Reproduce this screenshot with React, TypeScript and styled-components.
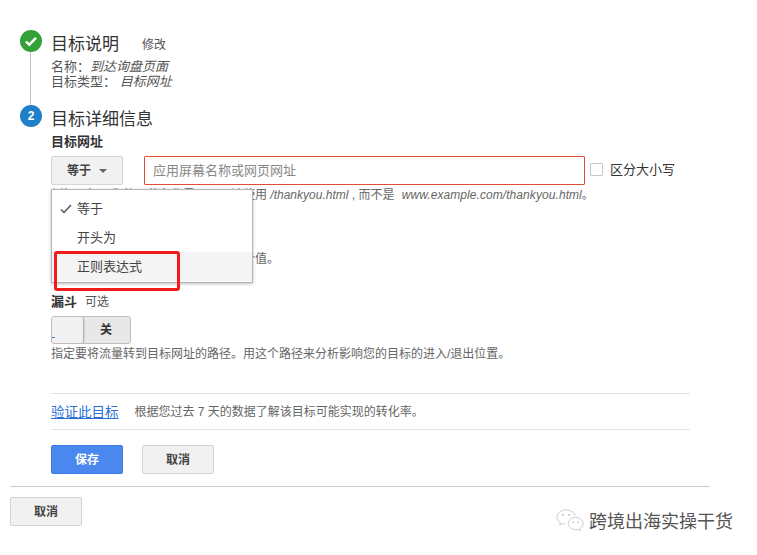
import styled, { createGlobalStyle } from "styled-components"

const GlobalStyle = createGlobalStyle`
	html, body {
		margin: 0;
		padding: 0;
		background: #fff;
	}
	body {
		font-family: "Liberation Sans", Arial, "Noto Sans CJK SC", sans-serif;
		color: #444;
	}
`

const Page = styled.div`
	width: 757px;
	height: 555px;
	overflow: hidden;
	position: relative;
	padding: 30px 0 0 10px;
	box-sizing: border-box;
`

const Steps = styled.div`
	width: 670px;
	padding-left: 10px;
`

const Step = styled.div`
	display: flex;
`

const Rail = styled.div`
	width: 31px;
	flex: none;
	display: flex;
	flex-direction: column;
	align-items: flex-start;
`

const Circle = styled.div<{ $done?: boolean }>`
	width: 22px;
	height: 22px;
	border-radius: 50%;
	background: ${(p) => (p.$done ? "#34a038" : "#1f7fc8")};
	color: #fff;
	font-size: 12px;
	font-weight: bold;
	display: flex;
	align-items: center;
	justify-content: center;
`

const RailLine = styled.div`
	width: 1px;
	height: 53px;
	margin-left: 10px;
	background: #c4c4c4;
`

const StepBody = styled.div`
	flex: 1;
	min-width: 0;
`

const TitleRow = styled.div`
	display: flex;
	align-items: center;
	height: 26px;
`

const StepTitle = styled.div`
	font-size: 17px;
	color: #333;
	margin-top: -1px;
`

const EditLink = styled.span`
	font-size: 12px;
	color: #555;
	margin-left: 23px;
`

const Summary = styled.div`
	font-size: 13px;
	line-height: 15px;
	color: #555;
	margin-top: 3px;
	em {
		font-style: italic;
	}
`

const FieldLabel = styled.div`
	font-size: 13px;
	font-weight: bold;
	color: #333;
	line-height: 16px;
	margin-top: 3px;
`

const MatchRow = styled.div`
	display: flex;
	align-items: center;
	margin-top: 6px;
	height: 29px;
	position: relative;
`

const GreyButton = styled.div`
	box-sizing: border-box;
	width: 72px;
	height: 29px;
	padding-bottom: 2px;
	background: #f1f1f1;
	border: 1px solid #d4d4d4;
	border-radius: 2px;
	font-size: 12px;
	font-weight: bold;
	color: #444;
	display: flex;
	align-items: center;
	justify-content: center;
	flex: none;
`

const Caret = styled.span`
	width: 0;
	height: 0;
	margin-left: 8px;
	margin-top: 2px;
	border-left: 4px solid transparent;
	border-right: 4px solid transparent;
	border-top: 4px solid #666;
`

const UrlInput = styled.div`
	box-sizing: border-box;
	width: 441px;
	height: 29px;
	margin-left: 21px;
	border: 1px solid #e34b33;
	border-radius: 1px;
	padding-left: 8px;
	font-size: 13px;
	line-height: 27px;
	color: #888;
	flex: none;
`

const CheckBox = styled.span`
	box-sizing: border-box;
	width: 13px;
	height: 13px;
	margin: 0 0 3px 5px;
	border: 1px solid #c8c8c8;
	border-radius: 1px;
	flex: none;
`

const CheckLabel = styled.span`
	font-size: 13px;
	color: #333;
	margin: 0 0 5px 7px;
`

const Hint = styled.div`
	font-size: 12px;
	line-height: 14px;
	color: #666;
	white-space: nowrap;
	em {
		font-style: italic;
	}
`

const MatchHint = styled(Hint)`
	margin-top: 3px;
`

const ExampleUrl = styled.em`
	margin-left: 4px;
	letter-spacing: 0.07px;
`

const ValueHint = styled(Hint)`
	margin-top: 50px;
`

const Menu = styled.div`
	position: absolute;
	left: 51px;
	top: 189px;
	box-sizing: border-box;
	width: 202px;
	height: 94px;
	background: #fff;
	border: 1px solid #b4b4b4;
	box-shadow: 0 1px 3px rgba(0, 0, 0, 0.25);
	padding-top: 4px;
`

const MenuItem = styled.div<{ $hover?: boolean }>`
	height: 29px;
	padding-left: 25px;
	position: relative;
	font-size: 13px;
	line-height: 30px;
	color: #444;
	background: ${(p) => (p.$hover ? "#f4f4f4" : "transparent")};
`

const Tick = styled.svg`
	position: absolute;
	left: 8px;
	top: 9px;
	width: 12px;
	height: 12px;
`

const RedMark = styled.div`
	position: absolute;
	left: 54px;
	top: 251px;
	box-sizing: border-box;
	width: 126px;
	height: 40px;
	border: 3px solid #f01c1c;
	border-radius: 3px;
`

const FunnelLabel = styled.div`
	margin-top: 26px;
	display: flex;
	align-items: center;
	gap: 8px;
	height: 16px;
	font-size: 12px;
	color: #555;
	strong {
		font-size: 13px;
		color: #333;
	}
`

const Toggle = styled.div`
	box-sizing: border-box;
	display: flex;
	width: 80px;
	height: 28px;
	margin-top: 8px;
	background: #e8e8e8;
	border: 1px solid #bdbdbd;
	border-radius: 3px;
	overflow: hidden;
	position: relative;
`

const Knob = styled.div`
	box-sizing: border-box;
	width: 32px;
	background: #f1f1f1;
	border-right: 1px solid #b4b4b4;
	border-radius: 0 3px 3px 0;
	box-shadow: 1px 0 1px rgba(0, 0, 0, 0.1);
`

const ToggleText = styled.div`
	flex: 1;
	padding-right: 2px;
	font-size: 12px;
	font-weight: bold;
	color: #333;
	text-align: center;
	line-height: 26px;
`

const ToggleTick = styled.span`
	position: absolute;
	left: 0;
	bottom: 5px;
	width: 3px;
	height: 1px;
	background: #3b78e7;
`

const FunnelHint = styled(Hint)`
	margin-top: 3px;
`

const VerifyRow = styled.div`
	box-sizing: content-box;
	margin-top: 32px;
	height: 33px;
	padding-bottom: 2px;
	border-top: 1px solid #e2e2e2;
	border-bottom: 1px solid #e2e2e2;
	display: flex;
	align-items: center;
	font-size: 12px;
	color: #666;
`

const VerifyLink = styled.a`
	font-size: 13.5px;
	color: #2a6fd8;
	text-decoration: underline;
	margin-right: 16px;
`

const Actions = styled.div`
	display: flex;
	gap: 19px;
	margin-top: 15px;
`

const SaveButton = styled(GreyButton)`
	background: #4a87ee;
	border-color: #3b78e7;
	color: #fff;
`

const Footer = styled.div`
	width: 700px;
	margin-top: 12px;
	padding-top: 10px;
	border-top: 1px solid #c9c9c9;
`

const Watermark = styled.div`
	position: absolute;
	left: 556px;
	top: 507px;
	display: flex;
	align-items: center;
	gap: 5px;
	font-size: 18px;
	color: #555;
	white-space: nowrap;
`

const WeChat = () => (
	<svg width="28" height="26" viewBox="0 0 32 26" fill="none" stroke="#c4c4c4" strokeWidth="1">
		<path d="M22 8.500C21 4.500 16.500 1.500 11.500 1.500 5.500 1.500 1 5.200 1 9.600c0 2.600 1.500 4.800 4 6.300l-.8 3 3.400-1.800c1 .3 2 .4 3 .4" />
		<path d="M31 17c0-3.800-3.900-7-8.500-7S14 13.200 14 17s3.900 7 8.500 7c1 0 2-.1 2.900-.4l2.800 1.600-.6-2.600C29.800 21.300 31 19.300 31 17z" />
		<circle cx="8" cy="7" r="1" fill="#b0b0b0" stroke="none" />
		<circle cx="15" cy="7" r="1" fill="#b0b0b0" stroke="none" />
		<circle cx="19.500" cy="15.500" r="0.900" fill="#b0b0b0" stroke="none" />
		<circle cx="25.500" cy="15.500" r="0.900" fill="#b0b0b0" stroke="none" />
	</svg>
)

const App = () => {
	return (
		<>
			<GlobalStyle />
			<Page>
				<Steps>
					<Step>
						<Rail>
							<Circle $done>
								<svg width="14" height="14" viewBox="0 0 14 14" fill="none" stroke="#fff" strokeWidth="2.4">
									<path d="M2 7.500l3.200 3.200L12 3.800" />
								</svg>
							</Circle>
							<RailLine />
						</Rail>
						<StepBody>
							<TitleRow>
								<StepTitle>目标说明</StepTitle>
								<EditLink>修改</EditLink>
							</TitleRow>
							<Summary>
								名称：<em>到达询盘页面</em>
								<br />
								目标类型： <em>目标网址</em>
							</Summary>
						</StepBody>
					</Step>
					<Step>
						<Rail>
							<Circle>2</Circle>
						</Rail>
						<StepBody>
							<TitleRow>
								<StepTitle>目标详细信息</StepTitle>
							</TitleRow>
							<FieldLabel>目标网址</FieldLabel>
							<MatchRow>
								<GreyButton>
									等于
									<Caret />
								</GreyButton>
								<UrlInput>应用屏幕名称或网页网址</UrlInput>
								<CheckBox />
								<CheckLabel>区分大小写</CheckLabel>
							</MatchRow>
							<MatchHint>
								例如，如果您的屏幕名称是页面，请使用 <em>/thankyou.html</em> , 而不是 <ExampleUrl>www.example.com/thankyou.html</ExampleUrl>。
							</MatchHint>
							<ValueHint>为转化分配货币价值，请为其输入一个值。</ValueHint>
							<FunnelLabel>
								<strong>漏斗</strong>
								可选
							</FunnelLabel>
							<Toggle>
								<Knob />
								<ToggleText>关</ToggleText>
								<ToggleTick />
							</Toggle>
							<FunnelHint>指定要将流量转到目标网址的路径。用这个路径来分析影响您的目标的进入/退出位置。</FunnelHint>
							<VerifyRow>
								<VerifyLink>验证此目标</VerifyLink>
								根据您过去 7 天的数据了解该目标可能实现的转化率。
							</VerifyRow>
							<Actions>
								<SaveButton>保存</SaveButton>
								<GreyButton>取消</GreyButton>
							</Actions>
						</StepBody>
					</Step>
				</Steps>
				<Footer>
					<GreyButton>取消</GreyButton>
				</Footer>
				<Menu>
					<MenuItem>
						<Tick viewBox="0 0 12 12" fill="none" stroke="#555" strokeWidth="1.500">
							<path d="M1 6.500l3 3L11 2" />
						</Tick>
						等于
					</MenuItem>
					<MenuItem>开头为</MenuItem>
					<MenuItem $hover>正则表达式</MenuItem>
				</Menu>
				<RedMark />
				<Watermark>
					<WeChat />
					跨境出海实操干货
				</Watermark>
			</Page>
		</>
	)
}

export default App
